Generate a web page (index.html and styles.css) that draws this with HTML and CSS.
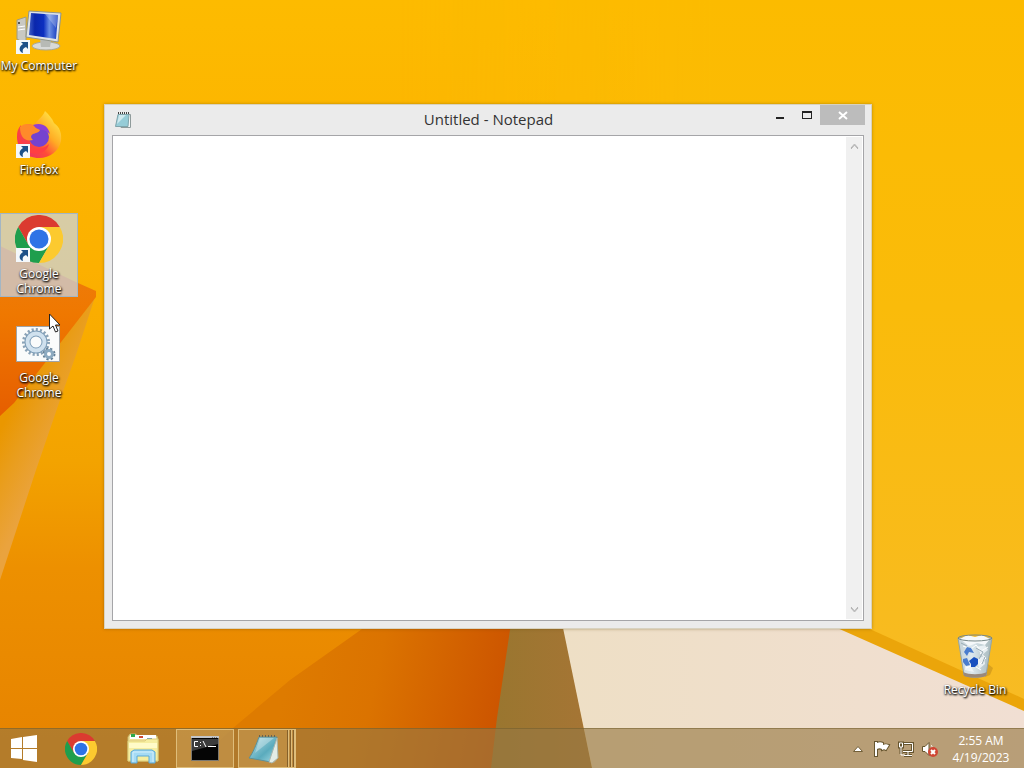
FILE: index.html
```html
<!DOCTYPE html>
<html lang="en">
<head>
    <meta charset="UTF-8">
    <title>Desktop</title>
    <link rel="stylesheet" href="styles.css">
</head>
<body>
    <svg class="defs" width="0" height="0" aria-hidden="true">
        <symbol id="chrome" viewBox="0 0 48 48">
            <path fill="#db3b30" d="M24 24V12h20.800A24 24 0 0 0 3.200 12L13.600 30z"/>
            <path fill="#1f9e4d" d="M3.200 12A24 24 0 0 0 24 48L34.400 30 24 24 13.600 30z"/>
            <path fill="#fcca2f" d="M44.800 12A24 24 0 0 1 24 48L34.400 30 24 12z"/>
            <circle cx="24" cy="24" r="12" fill="#fff"/>
            <circle cx="24" cy="24" r="9.500" fill="#2e73e6"/>
        </symbol>
        <symbol id="shortcut" viewBox="0 0 14 14">
            <path fill="#f4f8fb" d="M0 0h14v14H0z"/>
            <path fill="#1c5088" d="M5 2h7v7l-2-2c-3 1-4 3-3 6-4-1-5-6 0-9z"/>
        </symbol>
        <symbol id="notepad" viewBox="0 0 32 32">
            <path fill="#b9a888" opacity=".7" d="M18 29l11-2-3 3z"/>
            <path fill="url(#padBlue)" stroke="#5f8f96" d="M11 4h18l-6 25-22-4C5 20 8 12 11 4z"/>
            <path fill="#e3ece6" stroke="#a9b8b0" d="M29 5l1 20-6 5-3-1z"/>
            <path fill="#fff" opacity=".3" d="M12 5h14L7 20z"/>
            <path stroke="#6a6250" stroke-width="2" stroke-dasharray="1 2" d="M11 3h18"/>
        </symbol>
        <defs>
            <linearGradient id="padBlue" x1="0" y1="0" x2="1" y2="1">
                <stop offset="0" stop-color="#b9dfe6"/>
                <stop offset=".6" stop-color="#5aabbd"/>
                <stop offset="1" stop-color="#a8dce4"/>
            </linearGradient>
        </defs>
    </svg>

    <svg class="wallpaper" viewBox="0 0 1024 768" preserveAspectRatio="none" aria-hidden="true">
        <defs>
            <linearGradient id="sky" x1="0" y1="0" x2="0" y2="1">
                <stop offset="0" stop-color="#fdbb00"/>
                <stop offset=".35" stop-color="#fcb000"/>
                <stop offset=".6" stop-color="#f3a300"/>
                <stop offset=".74" stop-color="#ed9000"/>
                <stop offset="1" stop-color="#e68200"/>
            </linearGradient>
            <linearGradient id="right" x1="0" y1="0" x2="0" y2="1">
                <stop offset="0" stop-color="#fcbb00"/>
                <stop offset=".4" stop-color="#fabb0a"/>
                <stop offset="1" stop-color="#f7bb28"/>
            </linearGradient>
            <linearGradient id="fade" x1="0" y1="0" x2="1" y2="0">
                <stop offset="0" stop-color="#000"/>
                <stop offset=".5" stop-color="#fff"/>
            </linearGradient>
            <mask id="rightMask">
                <path fill="url(#fade)" d="M400 0h624v768H400z"/>
            </mask>
            <linearGradient id="fold" x1="0" y1="0" x2="0" y2="1">
                <stop offset="0" stop-color="#ee7d10"/>
                <stop offset=".4" stop-color="#ef7800"/>
                <stop offset="1" stop-color="#e65e00"/>
            </linearGradient>
            <linearGradient id="strip" gradientUnits="userSpaceOnUse" x1="0" y1="430" x2="52" y2="456">
                <stop offset="0" stop-color="#ea9700"/>
                <stop offset=".4" stop-color="#e99d1a"/>
                <stop offset="1" stop-color="#eaa33e"/>
            </linearGradient>
            <linearGradient id="dark" gradientUnits="userSpaceOnUse" x1="290" y1="660" x2="505" y2="705">
                <stop offset="0" stop-color="#de7b00"/>
                <stop offset=".4" stop-color="#db7300"/>
                <stop offset="1" stop-color="#cc5400"/>
            </linearGradient>
            <linearGradient id="brown" x1="0" y1="0" x2="1" y2="0">
                <stop offset="0" stop-color="#99762f"/>
                <stop offset="1" stop-color="#a67535"/>
            </linearGradient>
            <linearGradient id="cream" x1="0" y1="0" x2="1" y2="0">
                <stop offset="0" stop-color="#eedfc5"/>
                <stop offset="1" stop-color="#f1dfd3"/>
            </linearGradient>
        </defs>
        <path fill="url(#sky)" d="M0 0h1024v768H0z"/>
        <path fill="url(#right)" mask="url(#rightMask)" d="M400 0h624v768H400z"/>
        <path fill="url(#strip)" d="M96 294L76 355 60 400 36 470 0 580V405z"/>
        <path fill="url(#fold)" d="M0 246L78 283l18 8v6L51 355 14 403 0 416z"/>
        <path fill="url(#dark)" d="M362 629L290 680 233 728 190 768h305l20-145H370z"/>
        <path fill="url(#brown)" d="M511 623h52l29 145H491l6-50z"/>
        <path fill="#eba50a" d="M820 620h26l26 10 152 69v69H850z"/>
        <path fill="url(#cream)" d="M562 623h264l90 40 108 48v57H592z"/>
    </svg>

    <main class="desktop">
        <div class="icons">
            <button type="button" class="icon">
                <svg viewBox="0 0 48 48" class="icon-img" aria-hidden="true">
                    <defs>
                        <linearGradient id="screen" x1="0" y1="0" x2="1" y2="0">
                            <stop offset="0" stop-color="#3d5cc4"/>
                            <stop offset=".2" stop-color="#0a27ac"/>
                            <stop offset=".5" stop-color="#0c2fc0"/>
                            <stop offset=".7" stop-color="#6c90e4"/>
                            <stop offset="1" stop-color="#1239bd"/>
                        </linearGradient>
                    </defs>
                    <path fill="#c9c9c2" stroke="#a09c80" d="M2 13l9-3v27l-9-5z"/>
                    <path stroke="#fff" d="M3 20l7-1M3 23l7-1"/>
                    <circle cx="4" cy="16" r="1" fill="#333"/>
                    <ellipse cx="31" cy="39" rx="14" ry="4" fill="#d8dad8" stroke="#a9a897"/>
                    <path fill="#b7bab5" d="M25 32l11 2-1 6h-9z"/>
                    <path fill="#dfe3e6" stroke="#8d958f" d="M14 4l32 2-3 29-32-5z"/>
                    <path fill="url(#screen)" d="M16 6l27 2-2 24-27-4z"/>
                    <path fill="#fff" opacity=".25" d="M30 7l13 1-2 13z"/>
                    <use href="#shortcut" x="1" y="33" width="14" height="14"/>
                </svg>
                <span>My Computer</span>
            </button>
            <button type="button" class="icon">
                <svg viewBox="0 0 48 48" class="icon-img" aria-hidden="true">
                    <defs>
                        <linearGradient id="fox" x1="1" y1="0" x2="0" y2="1">
                            <stop offset=".1" stop-color="#ffe94a"/>
                            <stop offset=".4" stop-color="#ffac24"/>
                            <stop offset=".62" stop-color="#ff4b39"/>
                            <stop offset="1" stop-color="#e62773"/>
                        </linearGradient>
                    </defs>
                    <path fill="url(#fox)" d="M30 0c4 4 7 7 9 12 6 4 8 11 7 18-2 10-11 17-22 17C11 47 2 38 2 26c0-5 1-9 4-12v3c4-4 9-5 13-3 3-5 8-7 11-14z"/>
                    <circle cx="24" cy="26" r="10" fill="#7542cf"/>
                    <path fill="#8f3fd4" d="M18 14c8-3 15 0 17 9-4-4-8-5-12-4z"/>
                    <path fill="#ff8a2a" d="M5 16c4-4 10-4 14 0l6 3c-1 3-5 3-7 4-3 2-2 4 0 6-8 2-13-3-13-13z"/>
                    <path fill="#ff3f42" d="M3 19c1 9 5 16 14 18 7 2 13 0 17-4-2 8-10 11-18 9C7 40 1 29 3 19z"/>
                    <use href="#shortcut" x="1" y="33" width="14" height="14"/>
                </svg>
                <span>Firefox</span>
            </button>
            <button type="button" class="icon selected">
                <svg viewBox="0 0 48 48" class="icon-img" aria-hidden="true">
                    <use href="#chrome" width="48" height="48"/>
                    <use href="#shortcut" x="1" y="33" width="14" height="14"/>
                </svg>
                <span>Google Chrome</span>
            </button>
            <button type="button" class="icon">
                <svg viewBox="0 0 48 48" class="icon-img" aria-hidden="true">
                    <path fill="#fafbfb" stroke="#9fa4a8" d="M1.500 7.500h43v35h-43z"/>
                    <circle cx="21" cy="23" r="12" fill="none" stroke="#8ba3b7" stroke-width="4" stroke-dasharray="2 2"/>
                    <circle cx="21" cy="23" r="8.500" fill="none" stroke="#7f9eb8" stroke-width="6"/>
                    <circle cx="21" cy="23" r="8.500" fill="none" stroke="#d0e1ee" stroke-width="4"/>
                    <circle cx="34" cy="35" r="5" fill="none" stroke="#647f94" stroke-width="3" stroke-dasharray="2 2"/>
                    <circle cx="34" cy="35" r="3.500" fill="#fff" stroke="#8daac0" stroke-width="3"/>
                </svg>
                <span>Google Chrome</span>
            </button>
        </div>

        <button type="button" class="icon bin">
            <svg viewBox="0 0 48 48" class="icon-img" aria-hidden="true">
                <defs>
                    <linearGradient id="glass" x1="0" y1="0" x2="1" y2="0">
                        <stop offset="0" stop-color="#c3d0d4"/>
                        <stop offset=".4" stop-color="#dde8ee"/>
                        <stop offset="1" stop-color="#a5b7bb"/>
                    </linearGradient>
                </defs>
                <path fill="#c48f1d" opacity=".6" d="M37 33l5 4-3 7-5 2z"/>
                <path fill="url(#glass)" stroke="#93a5a8" d="M7 7h34l-6 37c-5 3-17 3-22 0z"/>
                <path fill="#f5f8fa" d="M9 8l7-4 8 2 7-2 8 4-5 6-8-2-8 3z"/>
                <path fill="#f2f7fa" opacity=".8" d="M25 16l9-2 3 5-6 5zM26 28l7-3 1 8-6 5zM14 34l6 2 3 5-9-2z"/>
                <path fill="none" stroke="#fff" d="M12 15l8 3 5-4 5 6 7-4M29 22l6 5-6 6M15 37l7-3 8 5"/>
                <path fill="none" stroke="#9aabb5" d="M25 17l7 4-4 7M31 33l3-7M10 12l6 3"/>
                <ellipse cx="24" cy="7" rx="17" ry="3" fill="none" stroke="#788888"/>
                <path fill="#4a7dce" d="M13 21l3-5 4 1 3 5-5-1-2 4zM12 28l4-1 3 7-4 1-3-4z"/>
                <path fill="#174fbf" d="M18 30l5-4 4 2v5l-3 3h-4v-3z"/>
                <path fill="#9a897a" d="M12 41c6 3 18 3 24 0l-1 4c-5 2-16 2-22 0z"/>
            </svg>
            <span>Recycle Bin</span>
        </button>

        <section class="window" aria-label="Untitled - Notepad">
            <header class="titlebar">
                <svg viewBox="0 0 16 16" class="title-icon" aria-hidden="true">
                    <path fill="#f5f8f8" stroke="#8f9b9b" d="M12 2.500h3.500v13H6z"/>
                    <path fill="#96ccd7" stroke="#7fa4ab" d="M3 2.500h11L13 14.500H.500z"/>
                    <path fill="#cfe9ee" d="M4 3h7L2 12z"/>
                    <path stroke="#444" stroke-width="2" stroke-dasharray="1 1" d="M3 1h12"/>
                </svg>
                <h1>Untitled - Notepad</h1>
                <div class="controls">
                    <button type="button" aria-label="Minimize">
                        <svg width="12" height="12" viewBox="0 0 12 12"><path fill="#222" d="M2 8h8v2H2z"/></svg>
                    </button>
                    <button type="button" aria-label="Maximize">
                        <svg width="12" height="12" viewBox="0 0 12 12"><path fill="#222" fill-rule="evenodd" d="M1 2h10v8H1zM2 4v5h8V4z"/></svg>
                    </button>
                    <button type="button" class="close" aria-label="Close">
                        <svg width="12" height="12" viewBox="0 0 12 12"><path fill="none" stroke="#fff" stroke-width="2" d="M2 3l8 7M10 3l-8 7"/></svg>
                    </button>
                </div>
            </header>
            <div class="client">
                <textarea aria-label="Text editor" spellcheck="false"></textarea>
                <div class="scrollbar">
                    <button type="button" aria-label="Scroll up">
                        <svg width="9" height="8" viewBox="0 0 9 8"><path fill="none" stroke="#b3b3b3" d="M1 6l3.500-4L8 6M1 7l3.500-4L8 7"/></svg>
                    </button>
                    <button type="button" aria-label="Scroll down">
                        <svg width="9" height="8" viewBox="0 0 9 8"><path fill="none" stroke="#b3b3b3" d="M1 2l3.500 4L8 2M1 1l3.500 4L8 1"/></svg>
                    </button>
                </div>
            </div>
        </section>

        <!-- mouse pointer -->
        <svg class="cursor" width="12" height="20" viewBox="0 0 12 20" aria-hidden="true">
            <path fill="#fff" stroke="#222" d="M.500 1v15l3.500-3 2.500 6 2.500-1-2.500-6H11z"/>
        </svg>
    </main>

    <footer class="taskbar">
        <button type="button" class="start" aria-label="Start">
            <svg width="26" height="26" viewBox="0 0 26 26">
                <path fill="#fff" d="M0 3l11-2v11H0zM12 1l14-2v13H12zM0 13h11v10L0 22zM12 13h14v13l-14-2z"/>
            </svg>
        </button>
        <button type="button" class="task" aria-label="Google Chrome">
            <svg width="32" height="32"><use href="#chrome"/></svg>
        </button>
        <button type="button" class="task" aria-label="File Explorer">
            <svg width="32" height="32" viewBox="0 0 32 32">
                <path fill="#f1e29a" stroke="#c9b568" d="M1 4l2-3h6l1 2h20l1 3v22H1z"/>
                <path fill="#fff" d="M3 2h26v4H3z"/>
                <path fill="#2fa84c" d="M4 1h4v3H4z"/>
                <path fill="#cf4a32" d="M12 3h4v2h-4z"/>
                <path fill="#3b7fc0" d="M20 5h5v2h-5z"/>
                <path fill="#f6eea0" stroke="#ddcd7a" d="M1 8h17l2-2h11v22H1z"/>
                <path fill="#fffbc8" d="M2 10h28v5H2z"/>
                <path fill="#a5dbf5" stroke="#5aa9d6" d="M4 30V19l3-2h18l3 2v11h-6v-7H10v7z"/>
                <path stroke="#d4effb" d="M6 29V19h20v10" fill="none"/>
            </svg>
        </button>
        <button type="button" class="task open" aria-label="Command Prompt">
            <svg width="32" height="32" viewBox="0 0 32 32">
                <path fill="#050505" stroke="#7c7870" d="M2.500 3.500h27v24h-27z"/>
                <path fill="#c3c5c8" d="M2 3h28v2H2z"/>
                <path fill="#3c3c3c" d="M3 6h26v5L3 18z"/>
                <path stroke="#777" stroke-dasharray="1 1" d="M23 4.500h6"/>
                <path fill="none" stroke="#fff" d="M9 8.500H5.500v5H9M11.500 9v1M11.500 12v1M14 8l3 6M19 13.500h8"/>
            </svg>
        </button>
        <button type="button" class="task open stacked" aria-label="Notepad">
            <svg width="32" height="32"><use href="#notepad"/></svg>
        </button>

        <div class="tray">
            <button type="button" aria-label="Show hidden icons">
                <svg width="16" height="16" viewBox="0 0 16 16"><path fill="#fff" stroke="#736039" d="M3.500 10.500h9L8 5.500z"/></svg>
            </button>
            <button type="button" aria-label="Action Center">
                <svg width="16" height="16" viewBox="0 0 16 16"><path fill="#fff" stroke="#66552f" stroke-width="2" paint-order="stroke" d="M1 1h2v14H1zM3 2c2-1 4-1 6 0v2c2-1 3-1 6 0-1 2-2 3-3 5-2-1-2-1-4 0V8C6 7 5 7 3 8z"/></svg>
            </button>
            <button type="button" aria-label="Network">
                <svg width="16" height="16" viewBox="0 0 16 16">
                    <path fill="none" stroke="#66552f" stroke-width="3" d="M6 2.500h8.500v8H5M10 11v3.500M6 14.500h8M1.500 2v4h3V2zM3 6v7"/>
                    <path fill="none" stroke="#fff" d="M6 2.500h8.500v8H5M10 11v3.500M6 14.500h8M1.500 2v4h3V2zM3 6v8h4"/>
                </svg>
            </button>
            <button type="button" aria-label="Volume muted">
                <svg width="16" height="16" viewBox="0 0 16 16">
                    <path fill="#fff" stroke="#66552f" d="M.500 5.500H3l4-4v13l-4-4H.500z"/>
                    <path fill="none" stroke="#fff" d="M9 4c1 1 1 1 1 3"/>
                    <circle cx="11" cy="11" r="5" fill="#cf4634"/>
                    <path stroke="#fff" stroke-width="2" d="M9 9l4 4M13 9l-4 4"/>
                </svg>
            </button>
        </div>
        <div class="clock">
            <time datetime="02:55">2:55 AM</time>
            <time datetime="2023-04-19">4/19/2023</time>
        </div>
    </footer>
</body>
</html>
```
FILE: styles.css
```css
* {
    box-sizing: border-box;
}

body {
    margin: 0;
    min-height: 100vh;
    display: flex;
    flex-direction: column;
    position: relative;
    overflow: hidden;
    font-family: "Open Sans", "Noto Sans", sans-serif;
    font-size: 12px;
}

button {
    margin: 0;
    padding: 0;
    border: none;
    background: none;
    font: inherit;
    color: inherit;
}

svg {
    display: block;
    overflow: visible;
}

.defs {
    position: absolute;
}

.wallpaper {
    position: absolute;
    inset: 0;
    width: 100%;
    height: 100%;
    z-index: -1;
}

/* Desktop */
.desktop {
    flex: 1;
    position: relative;
    display: flex;
    justify-content: space-between;
    padding: 5px 10px 15px 0;
}

.icons {
    display: flex;
    flex-direction: column;
    gap: 20px;
}

.icon {
    width: 78px;
    height: 84px;
    display: flex;
    flex-direction: column;
    align-items: center;
    gap: 3px;
    padding-top: 1px;
    border: 1px solid transparent;
    color: #fff;
    font-size: 12px;
    line-height: 15px;
    text-align: center;
    text-shadow: 1px 1px 2px #000, 0 1px 2px #000;
}

.icon span {
    margin: 0 -2px;
}

.icon-img {
    flex: none;
    width: 48px;
    height: 48px;
}

.icon.selected {
    background-color: rgba(200, 215, 235, 0.7);
    border-color: #a3b6c4;
}

.bin {
    align-self: flex-end;
}

.cursor {
    position: absolute;
    left: 49px;
    top: 313px;
}

/* Notepad window */
.window {
    position: absolute;
    top: 104px;
    right: 152px;
    bottom: 99px;
    left: 104px;
    display: flex;
    flex-direction: column;
    padding: 0 6px 7px 7px;
    background-color: #ebebeb;
    border: 1px solid #d8d2c0;
    box-shadow: 0 0 3px rgba(90, 60, 0, 0.4);
}

.titlebar {
    height: 30px;
    display: grid;
    grid-template-columns: 1fr auto 1fr;
    align-items: center;
}

.titlebar h1 {
    margin: 0;
    padding-bottom: 2px;
    font-size: 15px;
    font-weight: normal;
    line-height: 20px;
    color: #333;
}

.title-icon {
    width: 16px;
    height: 16px;
    margin-left: 3px;
}

.controls {
    align-self: start;
    justify-self: end;
    display: flex;
}

.controls button {
    width: 27px;
    height: 20px;
    display: flex;
    align-items: center;
    justify-content: center;
}

.controls .close {
    width: 45px;
    background-color: #bcbcbc;
}

.client {
    flex: 1;
    display: flex;
    margin-right: 1px;
    padding-right: 1px;
    background-color: #fff;
    border: 1px solid #a5a5a8;
}

.client textarea {
    flex: 1;
    min-width: 0;
    padding: 2px;
    border: none;
    outline: none;
    resize: none;
    overflow: hidden;
    background: none;
    font-family: "Liberation Mono", monospace;
    font-size: 13px;
}

.scrollbar {
    width: 16px;
    display: flex;
    flex-direction: column;
    justify-content: space-between;
    margin: 1px 0;
    background-color: #f0f0f0;
}

.scrollbar button {
    height: 18px;
    display: flex;
    align-items: center;
    justify-content: center;
}

/* Taskbar */
.taskbar {
    height: 40px;
    display: flex;
    gap: 4px;
    background-color: rgba(150, 121, 67, 0.63);
    border-top: 1px solid rgba(110, 90, 40, 0.5);
    color: #fff;
}

.start,
.task {
    display: flex;
    align-items: center;
    justify-content: center;
}

.start {
    width: 48px;
}

.task {
    width: 58px;
    border: 1px solid transparent;
}

.task.open {
    background-color: rgba(225, 190, 120, 0.3);
    border-color: #dfbd7a;
}

/* several windows grouped under one button */
.task.stacked {
    padding-right: 7px;
    background-image: repeating-linear-gradient(90deg, #85602a 0, #85602a 1px, #dfbd7a 1px, #dfbd7a 2px, transparent 2px, transparent 3px);
    background-size: 8px 100%;
    background-position: right;
    background-repeat: no-repeat;
}

.tray {
    display: flex;
    align-items: center;
    gap: 8px;
    margin-left: auto;
}

.clock {
    width: 78px;
    margin-right: 4px;
    display: flex;
    flex-direction: column;
    justify-content: center;
    font-size: 12px;
    line-height: 17px;
    text-align: center;
}
```
